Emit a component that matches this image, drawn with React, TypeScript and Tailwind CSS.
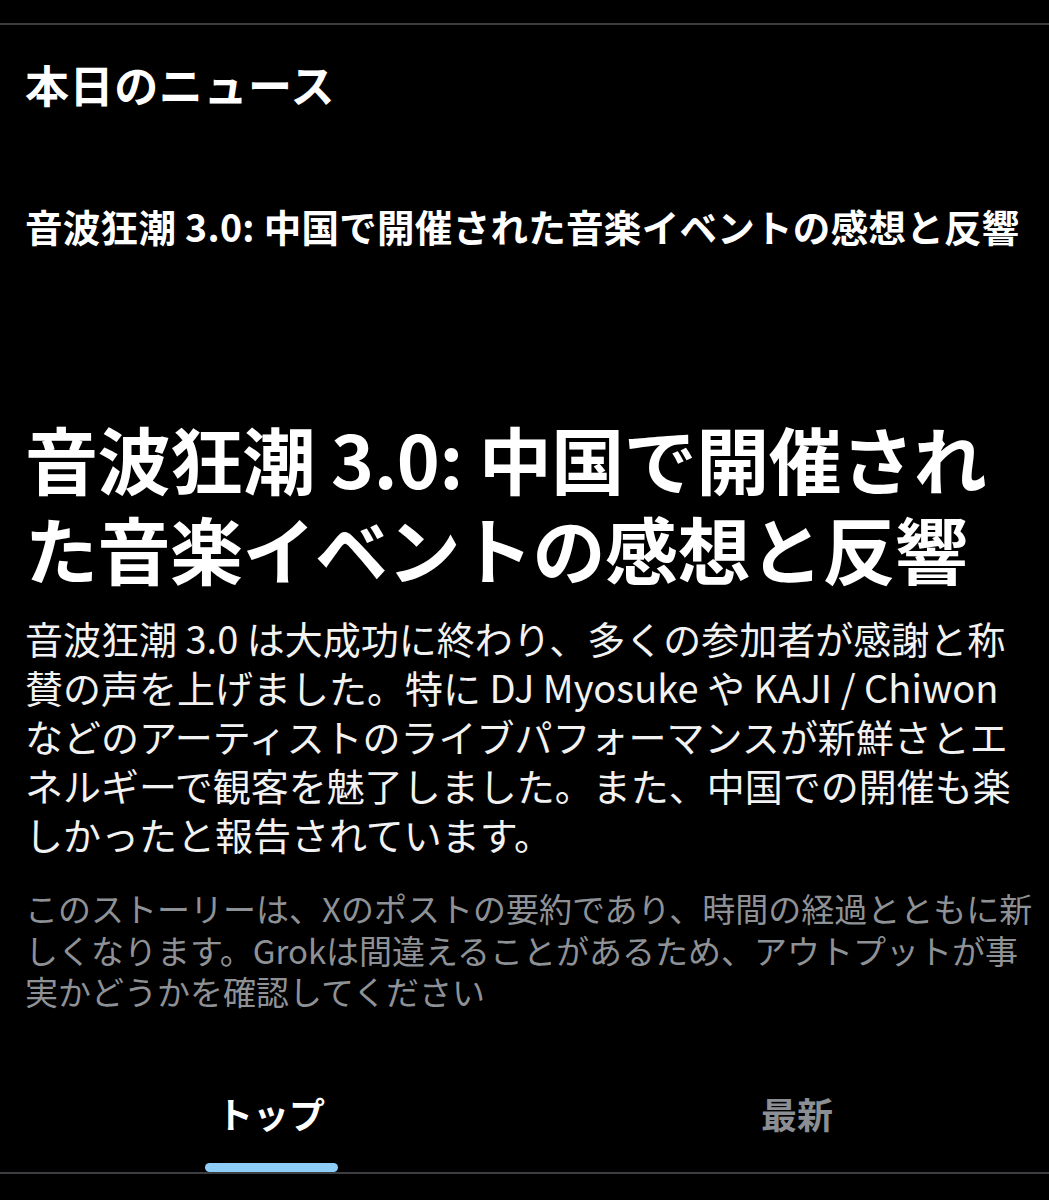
const jp = "font-['Noto_Sans_CJK_JP','Noto_Sans',sans-serif]";

const body = [
  "音波狂潮 3.0 は大成功に終わり、多くの参加者が感謝と称",
  "賛の声を上げました。特に DJ Myosuke や KAJI / Chiwon",
  "などのアーティストのライブパフォーマンスが新鮮さとエ",
  "ネルギーで観客を魅了しました。また、中国での開催も楽",
  "しかったと報告されています。",
];

export default function App() {
  const tabs = [
    { label: "トップ", active: true },
    { label: "最新", active: false },
  ];

  return (
    <div className={`${jp} bg-black text-white w-[1049px] h-[1200px] overflow-hidden pt-[23px]`}>
      <div className="h-[2px] bg-[#3b3d40]" />

      <div className="px-[25px]">
        <h1 className="mt-[33px] text-[44px] font-bold leading-[52px] tracking-[0.6px]">本日のニュース</h1>

        <h2 className="mt-[93px] text-[37.5px] font-semibold leading-[46px] whitespace-nowrap tracking-[0.3px]">
          音波狂潮 3.0: 中国で開催された音楽イベントの感想と反響
        </h2>

        <h3 className="mt-[163px] text-[73px] font-bold leading-[90px] tracking-[-0.5px] whitespace-nowrap">
          音波狂潮 3.0: 中国で開催され
          <br />
          た音楽イベントの感想と反響
        </h3>

        <p className="mt-[21px] text-[38px] leading-[49px] text-[#f2f2f2] whitespace-nowrap">
          {body.map((line) => (
            <span key={line} className="block">
              {line}
            </span>
          ))}
        </p>

        <p className="mt-[30px] text-[33px] leading-[41.5px] text-[#8e9196] w-[1010px]">
          このストーリーは、Xのポストの要約であり、時間の経過とともに新しくなります。Grokは間違えることがあるため、アウトプットが事実かどうかを確認してください
        </p>
      </div>

      <div className="mt-[78px] border-b-2 border-[#3b3d40]">
        <div className="ml-[8px] grid grid-cols-[526px_526px]">
          {tabs.map((t) => (
            <div key={t.label} className="flex flex-col items-center">
              <span
                className={`text-[36px] font-bold leading-[44px] ${t.active ? "text-white" : "text-[#8b8f94]"}`}
              >
                {t.label}
              </span>
              <div
                className={`mt-[28px] h-[9px] w-[133px] rounded-full ${t.active ? "bg-[#8ecdf7]" : "bg-transparent"}`}
              />
            </div>
          ))}
        </div>
      </div>
    </div>
  );
}
